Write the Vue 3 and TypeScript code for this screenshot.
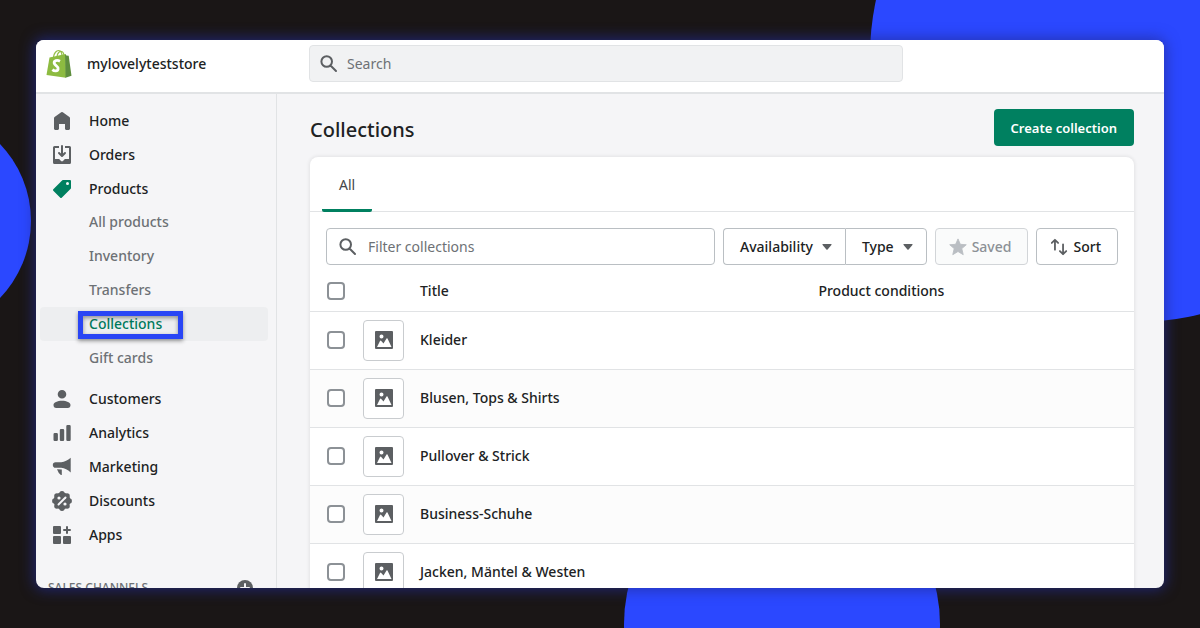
<script setup lang="ts">
import { ref } from 'vue'

interface NavItem {
  label: string
  icon: string
  children?: string[]
}

const primary: NavItem[] = [
  { label: 'Home', icon: 'home' },
  { label: 'Orders', icon: 'orders' },
  {
    label: 'Products',
    icon: 'products',
    children: ['All products', 'Inventory', 'Transfers', 'Collections', 'Gift cards'],
  },
  { label: 'Customers', icon: 'customers' },
  { label: 'Analytics', icon: 'analytics' },
  { label: 'Marketing', icon: 'marketing' },
  { label: 'Discounts', icon: 'discounts' },
  { label: 'Apps', icon: 'apps' },
]

const icons: Record<string, string> = {
  home: 'M18 7.3V17.5c0 .8-.7 1.5-1.5 1.5h-2c-.8 0-1.5-.7-1.5-1.5V13H7v4.5C7 18.3 6.3 19 5.500 19h-2C2.7 19 2 18.3 2 17.5V7.3c0-.5.2-.9.6-1.200l6.600-4.800a1.500 1.500 0 0 1 1.600 0l6.600 4.800c.4.3.6.7.6 1.200z',
  orders: 'M11 1a1 1 0 1 0-2 0v7.586L7.707 7.293a1 1 0 0 0-1.414 1.414l3 3a1 1 0 0 0 1.414 0l3-3a1 1 0 0 0-1.414-1.414L11 8.586V1zM3 14V3h4V1H2.500A1.500 1.500 0 0 0 1 2.500v15A1.500 1.500 0 0 0 2.500 19h15a1.500 1.500 0 0 0 1.500-1.500v-15A1.500 1.500 0 0 0 17.500 1H13v2h4v11h-3.500c-.8 0-1.400.7-1.900 1.200l-.1.2a2 2 0 0 1-3 0l-.1-.2C7.900 14.700 7.300 14 6.500 14H3z',
  products: 'M10.300 1.300A1 1 0 0 1 11 1h7a1 1 0 0 1 1 1v7a1 1 0 0 1-.3.7l-9 9a1 1 0 0 1-1.400 0l-7-7a1 1 0 0 1 0-1.400l9-9zM15.500 6a1.500 1.500 0 1 0 0-3 1.500 1.500 0 0 0 0 3z',
  customers: 'M10 1a4.300 4.300 0 1 1 0 8.600A4.300 4.300 0 0 1 10 1zM1.500 16c0-2.600 4-4.300 8.500-4.300s8.500 1.700 8.500 4.300c0 1.800-1 3-2.700 3H4.200c-1.700 0-2.700-1.200-2.700-3z',
  analytics: 'M15.500 2h2A1.200 1.200 0 0 1 18.700 3.200V16.800A1.200 1.200 0 0 1 17.500 18h-2a1.200 1.200 0 0 1-1.200-1.200V3.200A1.200 1.200 0 0 1 15.500 2zM9 6h2a1.200 1.200 0 0 1 1.200 1.200v9.600A1.200 1.200 0 0 1 11 18H9a1.200 1.200 0 0 1-1.200-1.200V7.200A1.200 1.200 0 0 1 9 6zM2.700 10h2a1.200 1.200 0 0 1 1.200 1.200v5.600A1.200 1.200 0 0 1 4.700 18h-2a1.200 1.200 0 0 1-1.200-1.200v-5.600A1.200 1.200 0 0 1 2.700 10z',
  marketing: 'M18.700.8v14.600c-3-2.600-6-4.200-9.500-4.600H3.800A2.900 2.900 0 0 1 .8 8 2.900 2.900 0 0 1 3.800 5.200h5.400c3.500-.4 6.500-1.900 9.500-4.400zM5 12.300l4.800.3v5.100q-.3.600-.9.200L6.800 16z',
  apps: 'M1 2a1 1 0 0 1 1-1h6a1 1 0 0 1 1 1v6a1 1 0 0 1-1 1H2a1 1 0 0 1-1-1zM1 12a1 1 0 0 1 1-1h6a1 1 0 0 1 1 1v6a1 1 0 0 1-1 1H2a1 1 0 0 1-1-1zM11 12a1 1 0 0 1 1-1h6a1 1 0 0 1 1 1v6a1 1 0 0 1-1 1h-6a1 1 0 0 1-1-1zM14 2a1 1 0 1 1 2 0v2h2a1 1 0 1 1 0 2h-2v2a1 1 0 1 1-2 0V6h-2a1 1 0 1 1 0-2h2z',
}

// Centres of the eight lobes on the edge of the discount badge
const lobes = Array.from({ length: 8 }, (_, i) => ({
  x: 10 + 7.2 * Math.cos((i * Math.PI) / 4),
  y: 10 + 7.2 * Math.sin((i * Math.PI) / 4),
}))

const current = 'Collections'
const collections: string[] = [
  'Kleider',
  'Blusen, Tops & Shirts',
  'Pullover & Strick',
  'Business-Schuhe',
  'Jacken, Mäntel & Westen',
]
const selected = ref<string[]>([])
const search = ref('')
const filter = ref('')

function toggleAll(event: Event): void {
  selected.value = (event.target as HTMLInputElement).checked ? [...collections] : []
}
</script>

<template>
  <div class="page">
    <div class="circle circle-top"></div>
    <div class="circle circle-left"></div>
    <div class="circle circle-bottom"></div>

    <div class="window">
      <header class="topbar">
        <a class="brand" href="#">
          <svg class="logo" viewBox="0 0 26 30" aria-hidden="true">
            <path d="M7.500 8C8 4 10.500 1.500 12.500 1.500S16 4 16 7.500M11 7.500C11.500 4 13.500 2 15.500 2.500S18 5 18 7" fill="none" stroke="#95bf47" stroke-width="1.200" />
            <path d="M3.500 8.500 19.500 5l.5 23.800L.500 26z" fill="#8dbb41" />
            <path d="m19 5 1.500 1.500 2.200.3L25.500 26.800l-6 2z" fill="#5e8e3e" />
            <path d="M14 12.200c-3-1.600-6.200-.5-5.800 2 .4 2.300 4.400 2.800 3.900 5.700-.4 2.500-3.700 2.500-5.700.7" fill="none" stroke="#fff" stroke-width="2.800" />
          </svg>
          <span>mylovelyteststore</span>
        </a>
        <label class="search">
          <svg class="icon" viewBox="0 0 20 20" aria-hidden="true">
            <path class="lens" d="M11.500 11.500 17 17M13 7.500a5.300 5.300 0 1 1-10.600 0 5.300 5.300 0 0 1 10.600 0z" />
          </svg>
          <input v-model="search" type="text" placeholder="Search" aria-label="Search" />
        </label>
      </header>

      <div class="body">
        <nav class="sidebar">
          <ul class="menu">
            <li v-for="item in primary" :key="item.label">
              <a class="nav-link" href="#">
                <svg class="icon" :class="{ active: item.children }" viewBox="0 0 20 20" aria-hidden="true">
                  <template v-if="item.icon === 'discounts'">
                    <circle cx="10" cy="10" r="8.400" />
                    <circle v-for="(lobe, i) in lobes" :key="i" :cx="lobe.x" :cy="lobe.y" r="2.700" />
                    <circle cx="7" cy="7" r="1.600" fill="#f5f5f7" />
                    <circle cx="13" cy="13" r="1.600" fill="#f5f5f7" />
                    <path d="M6.500 13.500 13.500 6.500" stroke="#f5f5f7" stroke-width="2" stroke-linecap="round" />
                  </template>
                  <path v-else :d="icons[item.icon]" fill-rule="evenodd" />
                </svg>
                <span>{{ item.label }}</span>
              </a>
              <ul v-if="item.children" class="submenu">
                <li v-for="child in item.children" :key="child">
                  <a
                    class="sub-link"
                    :class="{ current: child === current }"
                    :aria-current="child === current ? 'page' : undefined"
                    href="#"
                  >{{ child }}</a>
                </li>
              </ul>
            </li>
          </ul>
          <div class="channels">
            <span>SALES CHANNELS</span>
            <button class="add" type="button" aria-label="Add sales channel">
              <svg viewBox="0 0 16 16" aria-hidden="true">
                <circle cx="8" cy="8" r="8" />
                <path d="M8 4v8M4 8h8" stroke="#f5f5f7" stroke-width="2" stroke-linecap="round" />
              </svg>
            </button>
          </div>
        </nav>

        <main class="main">
          <div class="heading">
            <h1>Collections</h1>
            <button class="create" type="button">Create collection</button>
          </div>

          <section class="card">
            <div class="tabs" role="tablist">
              <button class="tab" type="button" role="tab" aria-selected="true">All</button>
            </div>

            <div class="toolbar">
              <label class="filter">
                <svg class="icon" viewBox="0 0 20 20" aria-hidden="true">
                  <path class="lens" d="M11.500 11.500 17 17M13 7.500a5.300 5.300 0 1 1-10.600 0 5.300 5.300 0 0 1 10.600 0z" />
                </svg>
                <input v-model="filter" type="text" placeholder="Filter collections" aria-label="Filter collections" />
              </label>
              <div class="group">
                <button class="btn" type="button">
                  Availability
                  <svg class="caret" viewBox="0 0 10 6" aria-hidden="true"><path d="M1 0h8q1 0 .4.900L5.600 5.500q-.6.600-1.200 0L.6.900Q0 0 1 0z" /></svg>
                </button>
                <button class="btn" type="button">
                  Type
                  <svg class="caret" viewBox="0 0 10 6" aria-hidden="true"><path d="M1 0h8q1 0 .4.900L5.600 5.500q-.6.600-1.200 0L.6.900Q0 0 1 0z" /></svg>
                </button>
              </div>
              <button class="btn saved" type="button" disabled>
                <svg class="glyph" viewBox="0 0 20 20" aria-hidden="true">
                  <path d="M10 1l2.600 6 6.600.5-5 4.300 1.600 6.700L10 15l-5.800 3.500 1.600-6.700-5-4.300L7.400 7z" stroke="#babec3" stroke-linejoin="round" />
                </svg>
                Saved
              </button>
              <button class="btn sort" type="button">
                <svg class="glyph" viewBox="0 0 20 20" aria-hidden="true">
                  <path d="M5.500 13V2M2 5.500l3.500-3.500L9 5.500M14.500 7v11M11 14.500l3.500 3.500 3.500-3.500" fill="none" stroke="#5c5f62" stroke-width="2" stroke-linecap="round" stroke-linejoin="round" />
                </svg>
                Sort
              </button>
            </div>

            <table class="table">
              <colgroup>
                <col class="col-check" />
                <col class="col-thumb" />
                <col />
                <col class="col-conditions" />
              </colgroup>
              <thead>
                <tr>
                  <th class="check"><input type="checkbox" aria-label="Select all collections" @change="toggleAll" /></th>
                  <th></th>
                  <th scope="col">Title</th>
                  <th class="conditions" scope="col">Product conditions</th>
                </tr>
              </thead>
              <tbody>
                <tr v-for="name in collections" :key="name">
                  <td class="check"><input v-model="selected" type="checkbox" :value="name" :aria-label="name" /></td>
                  <td>
                    <span class="thumb">
                      <svg viewBox="0 0 18 18" aria-hidden="true">
                        <path d="M1 0h16a1 1 0 0 1 1 1v16a1 1 0 0 1-1 1H1a1 1 0 0 1-1-1V1a1 1 0 0 1 1-1zM6.500 3.500a2 2 0 1 0 0 4 2 2 0 0 0 0-4zM2 16h14.500L12.500 7.500Q12 6.800 11.500 7.500L8.500 12.500 6 9.700Q5.500 9.300 5 10z" fill-rule="evenodd" />
                      </svg>
                    </span>
                  </td>
                  <td><a class="title" href="#">{{ name }}</a></td>
                  <td></td>
                </tr>
              </tbody>
            </table>
          </section>
        </main>
      </div>
    </div>
  </div>
</template>

<style>
body {
  margin: 0;
}
</style>

<style scoped>
*,
*::after {
  box-sizing: border-box;
}

.page {
  position: relative;
  height: 100vh;
  padding: 40px 36px;
  overflow: hidden;
  background: #1a1616;
  color: #202223;
  font-family: "Segoe UI", "Noto Sans", "Open Sans", sans-serif;
  font-size: 14px;
  font-weight: 500;
  line-height: 20px;
}

input,
button {
  font: inherit;
  color: inherit;
}

a {
  color: inherit;
  text-decoration: none;
}

ul {
  margin: 0;
  padding: 0;
  list-style: none;
}

.circle {
  position: absolute;
  border-radius: 50%;
  background: #2b48ff;
}

.circle-top {
  top: -210px;
  right: -202px;
  width: 532px;
  height: 532px;
}

.circle-left {
  top: 110px;
  left: -191px;
  width: 222px;
  height: 222px;
}

.circle-bottom {
  bottom: -154px;
  left: 52%;
  width: 316px;
  height: 316px;
}

.window {
  position: relative;
  display: flex;
  flex-direction: column;
  height: 100%;
  overflow: hidden;
  border-radius: 8px;
  background: #f5f5f7;
  box-shadow: 0 0 14px 2px rgba(34, 44, 150, 0.7);
}

.topbar {
  display: flex;
  flex: none;
  align-items: center;
  height: 54px;
  padding-bottom: 5px;
  border-bottom: 2px solid #e1e3e5;
  background: #fff;
}

.brand {
  display: flex;
  flex: none;
  align-items: center;
  gap: 15px;
  width: 273px;
  padding-left: 10px;
}

.logo {
  width: 26px;
  height: 30px;
}

.icon {
  flex: none;
  width: 20px;
  height: 20px;
  fill: #5c5f62;
}

.icon.active {
  fill: #008060;
}

.lens {
  fill: none;
  stroke: #5c5f62;
  stroke-width: 2;
  stroke-linecap: round;
}

.search,
.filter {
  display: flex;
  align-items: center;
  height: 37px;
  border: 1px solid #e1e3e5;
  border-radius: 4px;
  color: #6d7175;
  font-weight: 400;
}

.search {
  flex: 0 1 594px;
  gap: 8px;
  padding: 0 9px;
  background: #f1f2f3;
}

.search input,
.filter input {
  flex: 1;
  min-width: 0;
  padding: 0;
  border: 0;
  outline: 0;
  background: transparent;
}

input::placeholder {
  color: #6d7175;
  opacity: 1;
}

.body {
  display: flex;
  flex: 1;
  min-height: 0;
}

.sidebar {
  flex: none;
  width: 241px;
  padding-top: 10px;
  border-right: 1px solid #e1e3e5;
}

.nav-link {
  display: flex;
  align-items: center;
  gap: 17px;
  height: 34px;
  padding-left: 16px;
}

.submenu {
  margin: -1px 0 7px;
}

.sub-link {
  position: relative;
  display: flex;
  align-items: center;
  height: 34px;
  margin: 0 8px 0 4px;
  padding-left: 49px;
  border-radius: 4px;
  color: #6d7175;
}

.sub-link.current {
  background: #edeef0;
  color: #007a5c;
}

.sub-link.current::after {
  content: "";
  position: absolute;
  top: 4px;
  left: 38px;
  width: 105px;
  height: 28px;
  border: 5px solid #2945f5;
  box-shadow: 0 2px 4px rgba(0, 0, 0, 0.4), inset 0 2px 4px rgba(0, 0, 0, 0.4);
}

.channels {
  display: flex;
  align-items: center;
  justify-content: space-between;
  margin-top: 26px;
  padding: 0 23px 0 12px;
  color: #6d7175;
  font-size: 12px;
}

.add {
  display: flex;
  padding: 0;
  border: 0;
  background: none;
}

.add svg {
  width: 16px;
  height: 16px;
  fill: #5c5f62;
}

.main {
  flex: 1;
  min-width: 0;
  padding: 15px 30px 0 33px;
}

.heading {
  display: flex;
  align-items: flex-end;
  justify-content: space-between;
  margin-bottom: 11px;
}

h1 {
  margin: 0;
  font-size: 20px;
  font-weight: 500;
  line-height: 32px;
}

.create {
  height: 37px;
  padding: 0 17px;
  border: 0;
  border-radius: 4px;
  background: #008060;
  color: #fff;
  font-size: 13px;
  font-weight: 600;
}

.card {
  border-radius: 8px 8px 0 0;
  background: #fff;
  box-shadow: 0 0 4px rgba(23, 24, 24, 0.12);
}

.tabs {
  display: flex;
  height: 55px;
  padding-left: 12px;
  border-bottom: 1px solid #e1e3e5;
}

.tab {
  height: 55px;
  padding: 3px 17px 0;
  border: 0;
  border-bottom: 3px solid #008060;
  border-radius: 2px;
  background: none;
  color: #44474a;
  font-weight: 400;
}

.toolbar {
  display: flex;
  gap: 8px;
  padding: 16px 16px 0;
}

.filter {
  flex: 1;
  min-width: 0;
  gap: 10px;
  padding: 0 11px;
  border-color: #babfc3;
}

.group {
  display: flex;
}

.btn {
  display: flex;
  flex: none;
  align-items: center;
  height: 37px;
  padding: 0 16px;
  border: 1px solid #babfc3;
  border-radius: 4px;
  background: #fff;
}

.group .btn {
  gap: 9px;
  padding: 0 13px 0 16px;
}

.group .btn:first-child {
  border-right: 0;
  border-radius: 4px 0 0 4px;
}

.group .btn:last-child {
  border-radius: 0 4px 4px 0;
}

.caret {
  width: 10px;
  height: 6px;
  fill: #5c5f62;
}

.saved,
.sort {
  gap: 5px;
  padding: 0 16px 0 13px;
}

.saved {
  border-color: #d2d5d8;
  background: #fafbfb;
  color: #8c9196;
}

.glyph {
  width: 18px;
  height: 18px;
  fill: #babec3;
}

.table {
  width: 100%;
  border-collapse: collapse;
  table-layout: fixed;
}

.col-check {
  width: 53px;
}

.col-thumb {
  width: 57px;
}

.col-conditions {
  width: 40%;
}

th,
td {
  height: 58px;
  padding: 0;
  border-bottom: 1px solid #e1e3e5;
  text-align: left;
  font-weight: 500;
}

th {
  height: 46px;
  padding-top: 7px;
}

.check {
  padding-left: 17px;
}

.conditions {
  padding-left: 14px;
}

tbody tr:nth-child(even) {
  background: #fcfcfc;
}

input[type="checkbox"] {
  display: block;
  width: 18px;
  height: 18px;
  margin: 0;
  appearance: none;
  border: 2px solid #8c9196;
  border-radius: 4px;
  background: #fff;
}

input[type="checkbox"]:checked {
  border-color: #008060;
  background: #008060;
}

.thumb {
  display: flex;
  align-items: center;
  justify-content: center;
  width: 41px;
  height: 41px;
  border: 1px solid #c9cccf;
  border-radius: 4px;
  background: #fff;
}

.thumb svg {
  width: 18px;
  height: 18px;
  fill: #5c5f62;
}
</style>
